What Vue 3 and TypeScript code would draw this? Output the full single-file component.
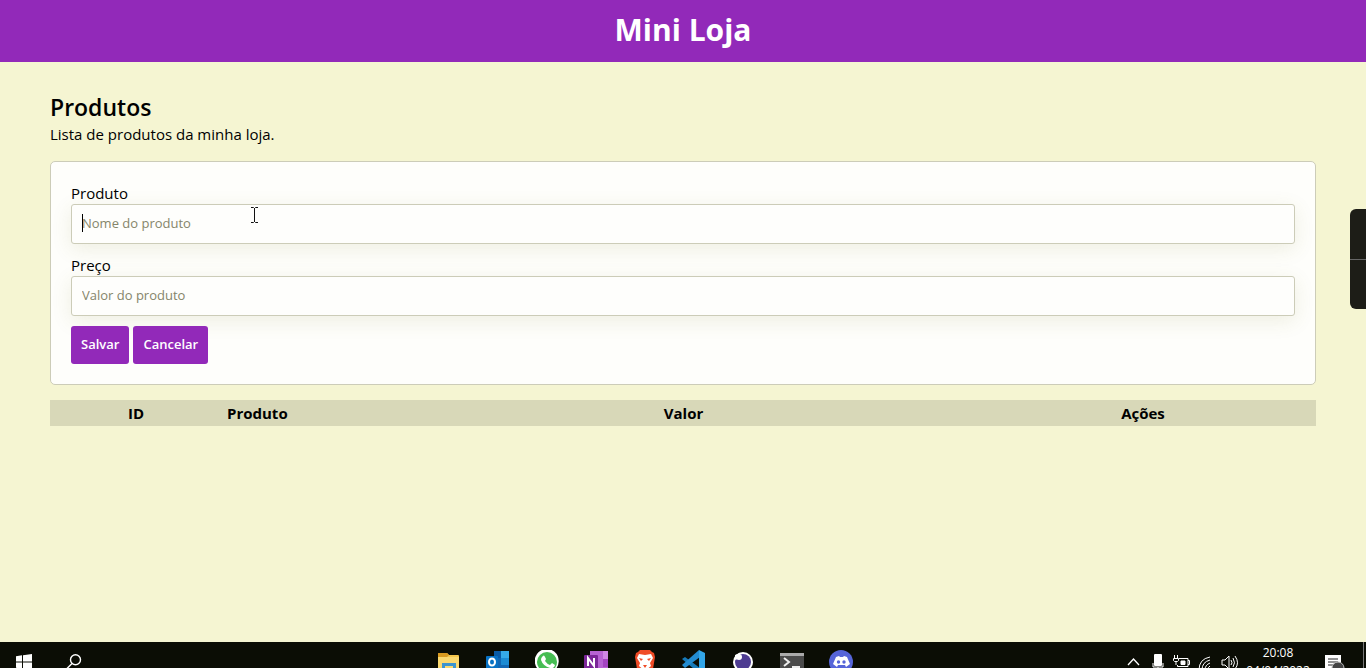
<script setup lang="ts">
import { ref } from 'vue'

const product = ref('')
const price = ref('')
</script>

<template>
  <div class="desktop">
    <header class="topbar"><h1>Mini Loja</h1></header>
    <main class="content">
      <h2>Produtos</h2>
      <p class="lead">Lista de produtos da minha loja.</p>
      <form class="card" @submit.prevent>
        <label for="product">Produto</label>
        <div class="field">
          <input id="product" v-model="product" type="text" placeholder="Nome do produto" />
          <span class="caret"></span>
          <svg class="pointer" width="9" height="18" viewBox="0 0 9 18">
            <path d="M1 1.500h2.500l1 1 1-1H8M4.500 2v14M1 16.500h2.500l1-1 1 1H8" fill="none" stroke="#111" />
          </svg>
        </div>
        <label for="price">Preço</label>
        <div class="field">
          <input id="price" v-model="price" type="text" placeholder="Valor do produto" />
        </div>
        <div class="actions">
          <button type="submit">Salvar</button>
          <button type="reset">Cancelar</button>
        </div>
      </form>
      <table>
        <thead>
          <tr><th class="id">ID</th><th class="name">Produto</th><th class="value">Valor</th><th>Ações</th></tr>
        </thead>
      </table>
    </main>

    <aside class="side-handle"><span></span><span></span></aside>

    <footer class="taskbar">
      <div class="start">
        <svg width="16" height="16" viewBox="0 0 16 16" fill="#fff">
          <path d="M0 2.200 6 1.300v6.200H0zM7 1.200 16 0v7.500H7zM0 8.500h6v6.200L0 13.800zM7 8.500h9V16l-9-1.200z" />
        </svg>
        <svg width="16" height="16" viewBox="0 0 16 16" fill="none" stroke="#fff" stroke-width="1.400">
          <circle cx="9.500" cy="5.700" r="5" /><path d="M6 9.500 0 15.500" />
        </svg>
      </div>
      <div class="apps">
        <svg width="24" height="24" viewBox="0 0 24 24">
          <path d="M1 4q0-1 1-1h8l2 2h9q1 0 1 1v18H1z" fill="#f4c64c" /><path d="M1 4q0-1 1-1h8l2 2-2 2H1z" fill="#d99a20" /><path d="M1 7h21v16H1z" fill="#fbd970" /><path d="M5 13h14v11H5z" fill="#3c94cf" /><path d="M8 16h8v8H8z" fill="#fbd970" />
        </svg>
        <svg width="24" height="24" viewBox="0 0 24 24">
          <path d="M8 1h15v22H8z" fill="#1267b4" /><path d="M15 1h8v7h-8z" fill="#35a9e8" /><path d="M15 8h8v7h-8z" fill="#1b8bd4" /><path d="M8 1h7v7H8z" fill="#0a5ba6" /><rect y="6" width="12" height="13" rx="1" fill="#0872c4" /><ellipse cx="6" cy="12" rx="3" ry="3.500" fill="none" stroke="#fff" stroke-width="2" />
        </svg>
        <svg width="24" height="24" viewBox="0 0 24 24">
          <path d="M1 24l1-6A12 12 0 1 1 7 22z" fill="#fff" /><circle cx="12" cy="12" r="10" fill="#46bd53" /><path d="M7 7q2-3 3 0l1 2-1 2q2 3 5 4l2-2 3 2q-1 4-5 3Q8 16 6 10q0-2 1-3z" fill="#fff" />
        </svg>
        <svg width="24" height="24" viewBox="0 0 24 24">
          <path d="M6 1h18v23H6z" fill="#b763d3" /><path d="M19 1h5v8h-5z" fill="#ce87e4" /><path d="M19 9h5v8h-5z" fill="#a444c2" /><rect y="5" width="14" height="14" rx="1" fill="#7b2698" /><path d="M4 16V8l6 8V8" fill="none" stroke="#fff" stroke-width="2" />
        </svg>
        <svg width="24" height="24" viewBox="0 0 24 24">
          <path d="M7 0h10l2 2 2 1 1 4-2 12-8 5-8-5L2 7l1-4 2-1z" fill="#f04b26" /><path d="m6 4 6 1 6-1 2 4-3 5 1 3-6 5-6-5 1-3-3-5z" fill="#fff" /><path d="m6 8 4 1-2 2zm12 0-4 1 2 2zm-8 7h4l-2 3z" fill="#f04b26" />
        </svg>
        <svg width="24" height="24" viewBox="0 0 24 24">
          <path d="m0 9 3-2 15 11v6z" fill="#1679b8" /><path d="M17 0 0 15l3 3L18 7z" fill="#238bd0" /><path d="m17 0 6 3v18l-6 3z" fill="#32a5e8" />
        </svg>
        <svg width="24" height="24" viewBox="0 0 24 24">
          <circle cx="12" cy="12" r="10" fill="#fff" /><circle cx="12" cy="12" r="8" fill="#4d3b91" /><circle cx="8" cy="7" r="3" fill="#fff" /><path d="M4 10q5-1 5-7l-5 2z" fill="#fff" />
        </svg>
        <svg width="24" height="24" viewBox="0 0 24 24">
          <path d="M0 3h24v19H0z" fill="#4b4b4b" /><path d="M0 3h24v3H0z" fill="#aaa" /><path d="m4 8 5 4-5 4M12 17h8" fill="none" stroke="#eee" stroke-width="2" />
        </svg>
        <svg width="24" height="24" viewBox="0 0 24 24">
          <circle cx="12" cy="12" r="12" fill="#5665d9" /><path d="m7 7 3-1 1 1h3l1-1 3 1 3 7-4 3-1-2H9l-1 2-4-3z" fill="#fff" /><circle cx="9.500" cy="12" r="1.700" fill="#5665d9" /><circle cx="15" cy="12" r="1.700" fill="#5665d9" />
        </svg>
      </div>
      <div class="tray">
        <svg width="18" height="18" viewBox="0 0 18 18" fill="none" stroke="#fff" stroke-width="1.300"><path d="m4 11 5.500-6L15 11" /></svg>
        <svg width="18" height="18" viewBox="0 0 18 18"><rect x="6" y="0" width="8" height="12" rx="1" fill="#fff" /><path d="M5 9v4h10V9M10 13v4" fill="none" stroke="#fff" /></svg>
        <svg width="18" height="18" viewBox="0 0 18 18" fill="none" stroke="#fff"><path d="M7 4.500h9v8H5.500V11M16 6.500h1.500v4H16" /><path d="M9 7h4v3.500H9z" fill="#fff" /><path d="M2.500 1v3M5.500 1v3M1.500 4.500h5v2l-1 1h-3l-1-1zM4 8v3" /></svg>
        <svg width="18" height="18" viewBox="0 0 18 18" fill="none" stroke="#fff"><path d="M3 16Q3 5 14 3M6 16q0-8 8-10M9 16q0-5 5-7M12 16q0-3 2-4" /></svg>
        <svg width="20" height="18" viewBox="0 0 20 18" fill="none" stroke="#fff"><path d="M2 6h3l4-4v13l-4-4H2zM11 6q2 3 0 5M13 4q3 5 0 9M15 2q5 7 0 13" /></svg>
        <div class="clock"><span>20:08</span><span>04/04/2022</span></div>
        <svg class="notice" width="22" height="22" viewBox="0 0 22 22"><path d="M2 1h16v14h-9l-4 4v-4H2z" fill="#fff" /><path d="M5 5h10M5 8h10M5 11h7" stroke="#222" /><circle cx="15" cy="14" r="6" fill="#444" stroke="#bbb" /></svg>
        <i></i>
      </div>
    </footer>
  </div>
</template>

<style>
body { margin: 0; }
</style>

<style scoped>
* { box-sizing: border-box; }
.desktop {
  position: relative;
  display: flex;
  flex-direction: column;
  height: 100vh;
  overflow: hidden;
  background: #f5f5d2;
  color: #000;
  font: 15px/22px "Open Sans", "Noto Sans", sans-serif;
}
h1, h2, p { margin: 0; }
.topbar { padding: 7px 8px 9px; background: #9229b9; color: #fff; text-align: center; }
h1 { font-size: 30px; line-height: 46px; font-weight: 700; }
.content { flex: 1; padding: 29px 50px 0; }
h2 { font-size: 23px; line-height: 32px; font-weight: 600; }
.lead { margin-bottom: 16px; }
.card {
  margin-bottom: 15px;
  padding: 20px;
  border: 1px solid #ccccb8;
  border-radius: 5px;
  background: #fefefb;
}
label { display: block; line-height: 22px; }
.field { position: relative; margin-bottom: 10px; }
input {
  display: block;
  width: 100%;
  height: 40px;
  padding: 9px 10px 11px;
  border: 1px solid #ccccb8;
  border-radius: 3px;
  background: #fefefc;
  box-shadow: 0 5px 20px rgba(120, 120, 40, 0.12);
  font: 13px/18px "Open Sans", sans-serif;
  outline: 0;
}
input::placeholder { color: #85856a; opacity: 1; }
.caret { position: absolute; top: 10px; left: 11px; width: 1px; height: 18px; background: #000; }
.pointer { position: absolute; top: 2px; left: 179px; }
.actions { position: relative; display: flex; gap: 4px; }
button {
  height: 38px;
  padding: 0 10px 2px;
  border: 0;
  border-radius: 3px;
  background: #9229b9;
  color: #fff;
  font: 600 13px/18px "Open Sans", sans-serif;
}
table { width: 100%; border-collapse: collapse; table-layout: fixed; background: #d8d8b8; }
th { height: 26px; padding: 0; font-weight: 700; }
.id { width: 172px; }
.name { width: 175px; padding-left: 5px; text-align: left; }
.value { width: 573px; }
.side-handle { position: absolute; top: 209px; right: 0; display: grid; width: 16px; height: 100px; overflow: hidden; border-radius: 6px 0 0 6px; background: #1d1d17; }
.side-handle span + span { border-top: 1px solid #666; }
.taskbar { display: flex; height: 26px; overflow: hidden; background: #0b0d05; color: #fff; }
.start { display: flex; flex: none; gap: 34px; width: 437px; padding: 12px 0 0 16px; }
.start svg, .apps svg, .tray svg { flex: none; }
.apps { display: flex; gap: 25px; padding-top: 8px; }
.tray { display: flex; gap: 6px; margin-left: auto; padding-top: 12px; }
.clock { display: grid; flex: none; width: 64px; margin: -10px 7px 0 0; font: 12px/18px "Open Sans", sans-serif; text-align: center; }
.notice { margin-right: 12px; }
i { width: 3px; margin-top: -12px; border-left: 1px solid #777; }
</style>
